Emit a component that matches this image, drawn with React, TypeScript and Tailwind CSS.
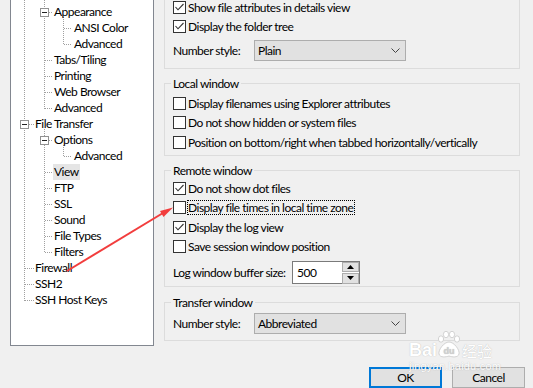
import React from "react";

type Row = { t: string; l: 1 | 2 | 3; sel?: boolean };

const rows: Row[] = [
  { t: "", l: 1 },
  { t: "Appearance", l: 2 },
  { t: "ANSI Color", l: 3 },
  { t: "Advanced", l: 3 },
  { t: "Tabs/Tiling", l: 2 },
  { t: "Printing", l: 2 },
  { t: "Web Browser", l: 2 },
  { t: "Advanced", l: 2 },
  { t: "File Transfer", l: 1 },
  { t: "Options", l: 2 },
  { t: "Advanced", l: 3 },
  { t: "View", l: 2, sel: true },
  { t: "FTP", l: 2 },
  { t: "SSL", l: 2 },
  { t: "Sound", l: 2 },
  { t: "File Types", l: 2 },
  { t: "Filters", l: 2 },
  { t: "Firewall", l: 1 },
  { t: "SSH2", l: 1 },
  { t: "SSH Host Keys", l: 1 },
];

const padFor: Record<number, string> = {
  1: "pl-[23px]",
  2: "pl-[42px]",
  3: "pl-[62px]",
};

function TreeLines() {
  const c = "#a0a0a0";
  const V = (x: number, y1: number, y2: number) => (
    <line x1={x - 11 + 0.5} y1={y1} x2={x - 11 + 0.5} y2={y2} stroke={c} strokeDasharray="1 1" />
  );
  const H = (y: number, x1: number, x2: number) => (
    <line x1={x1 - 11} y1={y + 0.5} x2={x2 - 11} y2={y + 0.5} stroke={c} strokeDasharray="1 1" />
  );
  const Box = (cx: number, cy: number) => (
    <g>
      <rect x={cx - 4 - 11 + 0.5} y={cy - 4 + 0.5} width={8} height={8} fill="#fff" stroke="#919191" />
      <line x1={cx - 2 - 11} y1={cy + 0.5} x2={cx + 3 - 11} y2={cy + 0.5} stroke="#222" />
    </g>
  );
  return (
    <svg className="absolute left-0 top-0" width="142" height="346" shapeRendering="crispEdges">
      {V(24, 0, 301)}
      {H(124, 29, 34)}
      {H(268, 25, 34)}
      {H(284, 25, 34)}
      {H(300, 25, 34)}
      {V(44, 0, 109)}
      {H(12, 49, 53)}
      {H(60, 45, 53)}
      {H(76, 45, 53)}
      {H(92, 45, 53)}
      {H(108, 45, 53)}
      {V(63, 17, 45)}
      {H(28, 64, 72)}
      {H(44, 64, 72)}
      {V(44, 129, 253)}
      {H(140, 49, 53)}
      {H(172, 45, 53)}
      {H(188, 45, 53)}
      {H(204, 45, 53)}
      {H(220, 45, 53)}
      {H(236, 45, 53)}
      {H(252, 45, 53)}
      {V(63, 145, 157)}
      {H(156, 64, 72)}
      {Box(24, -5)}
      {Box(24, 124)}
      {Box(44, 12)}
      {Box(44, 140)}
    </svg>
  );
}

function Tree() {
  return (
    <div className="relative ml-[10px] w-[144px] h-[346px] shrink-0 border-x border-b border-[#828790] bg-white overflow-hidden">
      <TreeLines />
      <div className="relative -mt-[12px]">
        {rows.map((r, i) => (
          <div key={i} className={`h-[16px] flex items-center ${padFor[r.l]}`}>
            {r.t && (
              <span className={`px-[1px] leading-[16px] whitespace-nowrap ${r.sel ? "bg-[#e5e5e5]" : ""}`}>{r.t}</span>
            )}
          </div>
        ))}
      </div>
    </div>
  );
}

function Check({ checked }: { checked?: boolean }) {
  return (
    <span className="w-[13px] h-[13px] shrink-0 border border-[#333333] bg-white flex items-center justify-center">
      {checked && (
        <svg width="11" height="11" viewBox="0 0 11 11">
          <path d="M1.5 5 L4 7.8 L9.5 2" stroke="#333" strokeWidth="1.1" fill="none" />
        </svg>
      )}
    </span>
  );
}

function CheckRow({
  label,
  checked,
  focus,
  h,
}: {
  label: string;
  checked?: boolean;
  focus?: boolean;
  h: string;
}) {
  return (
    <div className={`flex items-center ${h}`}>
      <Check checked={checked} />
      <span
        className={`ml-[1px] pr-[1px] border leading-[13px] whitespace-nowrap ${
          focus ? "border-dotted border-black" : "border-transparent"
        }`}
      >
        {label}
      </span>
    </div>
  );
}

function Select({ value, h }: { value: string; h: string }) {
  return (
    <div className={`w-[152px] ${h} border border-[#adadad] bg-[#e1e1e1] flex items-center justify-between pl-[3px] pr-[5px]`}>
      <span>{value}</span>
      <svg width="9" height="5" viewBox="0 0 9 5">
        <path d="M0.5 0.5 L4.5 4.5 L8.5 0.5" stroke="#444" fill="none" />
      </svg>
    </div>
  );
}

function Spin() {
  return (
    <div className="ml-auto flex flex-col gap-[1px]">
      <div className="w-[17px] h-[10px] border border-[#adadad] bg-[#e1e1e1] flex items-center justify-center">
        <svg width="7" height="4" viewBox="0 0 7 4">
          <path d="M0 4 L3.5 0 L7 4 Z" fill="#000" />
        </svg>
      </div>
      <div className="w-[17px] h-[11px] border border-[#adadad] bg-[#e1e1e1] flex items-center justify-center">
        <svg width="7" height="4" viewBox="0 0 7 4">
          <path d="M0 0 L3.5 4 L7 0 Z" fill="#000" />
        </svg>
      </div>
    </div>
  );
}

function Arrow() {
  return (
    <svg className="absolute left-0 top-0 pointer-events-none" width="533" height="388">
      <line x1="67" y1="271" x2="163" y2="213" stroke="#f23d3d" strokeWidth="2" />
      <path d="M173 207.5 L160 211 L163.5 217 Z" fill="#f23d3d" />
    </svg>
  );
}

function Watermark() {
  return (
    <div className="absolute left-[409px] top-[331px] pointer-events-none text-white tracking-normal [text-shadow:0_0_1px_rgba(120,120,120,0.55)]">
      <div className="flex items-end h-[28px]">
        <span className="text-[18px] font-bold leading-[18px] font-[family-name:Liberation_Sans,sans-serif]">Bai</span>
        <svg width="25" height="28" viewBox="0 0 25 28" className="-ml-[1px]">
          <g fill="#fff" stroke="#c8c8c8" strokeWidth="0.8">
            <ellipse cx="5" cy="8" rx="2.6" ry="3.2" />
            <ellipse cx="10" cy="3.5" rx="2.6" ry="3.2" />
            <ellipse cx="16" cy="3.5" rx="2.6" ry="3.2" />
            <ellipse cx="21" cy="8" rx="2.6" ry="3.2" />
            <path d="M13 11 C8 11 2 19 3 23 C4 27 10 26 13 25 C16 26 22 27 23 23 C24 19 18 11 13 11 Z" />
          </g>
          <text x="13" y="23" textAnchor="middle" fontSize="9" fontWeight="bold" fill="#d0d0d0" fontFamily="Liberation Sans, sans-serif">du</text>
        </svg>
        <span className="ml-[1px] text-[15px] leading-[17px] font-[family-name:Noto_Sans_CJK_SC,sans-serif]">经验</span>
      </div>
      <div className="mt-[2px] text-[11px] leading-[11px] tracking-[0.2px] font-[family-name:Liberation_Sans,sans-serif]">
        jingyan.baidu.com
      </div>
    </div>
  );
}

export default function App() {
  return (
    <div className="relative w-[533px] h-[388px] overflow-hidden bg-[#f0f0f0] text-[12px] leading-[16px] tracking-[-0.5px] text-black font-[family-name:Lato,sans-serif]">
      <div className="flex h-[346px]">
        <Tree />
        <div className="ml-[10px] w-[356px] flex flex-col">
          <div className="border-x border-b border-[#dcdcdc] pl-[8px] pb-[7px]">
            <div className="-mt-[2px]">
              <CheckRow h="h-[19px]" checked label="Show file attributes in details view" />
              <CheckRow h="h-[19px]" checked label="Display the folder tree" />
            </div>
            <div className="flex items-center mt-[4px]">
              <span className="w-[81px] whitespace-nowrap">Number style:</span>
              <Select value="Plain" h="h-[21px]" />
            </div>
          </div>

          <fieldset className="mt-[6px] border border-[#dcdcdc] px-[6px] pt-[1px] pb-[3px]">
            <legend className="px-[2px] leading-[17px]">Local window</legend>
            <div className="ml-[2px]">
              <CheckRow h="h-[20px]" label="Display filenames using Explorer attributes" />
              <CheckRow h="h-[19px]" label="Do not show hidden or system files" />
              <CheckRow h="h-[20px]" label="Position on bottom/right when tabbed horizontally/vertically" />
            </div>
          </fieldset>

          <fieldset className="mt-[6px] border border-[#dcdcdc] px-[6px] pb-[2px]">
            <legend className="px-[2px] leading-[17px]">Remote window</legend>
            <div className="ml-[2px]">
              <CheckRow h="h-[19px]" checked label="Do not show dot files" />
              <CheckRow h="h-[19px]" focus label="Display file times in local time zone" />
              <CheckRow h="h-[20px]" checked label="Display the log view" />
              <CheckRow h="h-[19px]" label="Save session window position" />
              <div className="flex items-center mt-[5px] h-[23px]">
                <span className="w-[119px] whitespace-nowrap">Log window buffer size:</span>
                <div className="w-[68px] h-[23px] border border-[#7a7a7a] bg-white flex items-center pl-[4px]">
                  <span>500</span>
                  <Spin />
                </div>
              </div>
            </div>
          </fieldset>

          <fieldset className="mt-[7px] border border-[#dcdcdc] px-[6px] pb-[6px]">
            <legend className="px-[2px] leading-[17px]">Transfer window</legend>
            <div className="ml-[2px] mt-[2px] flex items-center">
              <span className="w-[81px] whitespace-nowrap">Number style:</span>
              <Select value="Abbreviated" h="h-[21px]" />
            </div>
          </fieldset>
        </div>
      </div>

      <div className="flex justify-end gap-[10px] pr-[8px] mt-[21px]">
        <button className="w-[73px] h-[21px] border-2 border-[#0078d7] bg-[#e1e1e1] flex items-center justify-center">
          OK
        </button>
        <button className="w-[73px] h-[21px] border border-[#adadad] bg-[#e1e1e1] flex items-center justify-center">
          Cancel
        </button>
      </div>

      <Arrow />
      <Watermark />
    </div>
  );
}
